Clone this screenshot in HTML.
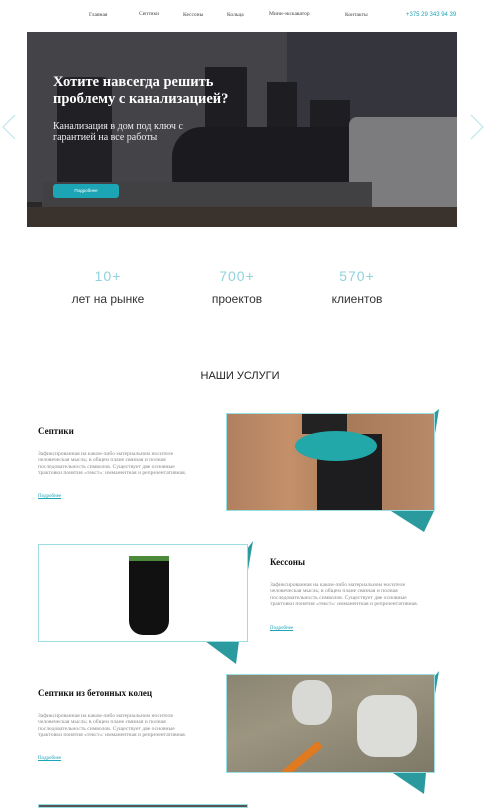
<!DOCTYPE html>
<html><head><meta charset="utf-8"><style>
*{margin:0;padding:0;box-sizing:border-box}
body{width:500px;height:808px;overflow:hidden;background:#fff;font-family:"Liberation Serif",serif;position:relative;color:#222}
.a{position:absolute}
.nav{font-size:5.5px;color:#444;top:12px}
.hero{left:27px;top:32px;width:430px;height:195px;background:linear-gradient(180deg,#4a4a4f 0%,#3a3a3e 40%,#2b2b2e 75%,#3b3530 100%);overflow:hidden}
.stat{font-family:"Liberation Sans",sans-serif;text-align:center;width:120px}
.n{font-size:14px;color:#8fd3dc;top:268px;letter-spacing:1px}
.l{font-size:12px;color:#333;top:292px}
h3{position:absolute;font-family:"Liberation Serif",serif;font-weight:bold;font-size:9px;color:#111}
.p{font-size:5.6px;line-height:6.3px;color:#888;width:152px}
.lk{font-size:5px;color:#1ba5b5;text-decoration:underline}
.img{border:1px solid #9adde3}
</style></head><body>
<div class="a nav" style="left:89px">Главная</div>
<div class="a nav" style="left:139px;top:11px">Септики</div>
<div class="a nav" style="left:183px">Кессоны</div>
<div class="a nav" style="left:227px">Кольца</div>
<div class="a nav" style="left:269px;top:11px">Мини-экскаватор</div>
<div class="a nav" style="left:345px">Контакты</div>
<div class="a nav" style="left:406px;color:#1ba5b5;font-size:6px;font-family:'Liberation Sans',sans-serif">+375 29 343 94 39</div>

<div class="a hero">
 <div class="a" style="left:0;top:0;width:260px;height:170px;background:#58585c"></div>
 <div class="a" style="left:260px;top:0;width:170px;height:110px;background:#44464d"></div>
 <div class="a" style="left:30px;top:45px;width:55px;height:135px;background:#26262a;border-radius:10px 10px 0 0"></div>
 <div class="a" style="left:178px;top:35px;width:42px;height:70px;background:#232326"></div>
 <div class="a" style="left:240px;top:50px;width:30px;height:50px;background:#232326"></div>
 <div class="a" style="left:283px;top:68px;width:40px;height:50px;background:#232326"></div>
 <div class="a" style="left:145px;top:95px;width:210px;height:80px;background:#1f1f22;border-radius:30px"></div>
 <div class="a" style="left:322px;top:85px;width:108px;height:90px;background:#a9a9a9;border-radius:8px 0 0 0"></div>
 <div class="a" style="left:15px;top:150px;width:330px;height:30px;background:#555"></div>
 <div class="a" style="left:0;top:175px;width:430px;height:20px;background:#4a4035"></div>
 <div class="a" style="left:0;top:0;width:430px;height:195px;background:rgba(20,20,25,.3)"></div>
 <div class="a" style="left:26px;top:42px;color:#fff;font-weight:bold;font-size:14.5px;line-height:17px;width:220px">Хотите навсегда решить проблему с канализацией?</div>
 <div class="a" style="left:26px;top:89px;color:#eee;font-size:10px;line-height:11px;width:140px">Канализация в дом под ключ с гарантией на все работы</div>
 <div class="a" style="left:26px;top:152px;width:66px;height:14px;background:#1ba5b5;border-radius:3px;color:#fff;font-size:4.5px;text-align:center;line-height:14px;font-family:'Liberation Sans',sans-serif">Подробнее</div>
</div>
<svg class="a" style="left:0;top:112px" width="20" height="30"><path d="M15 3 L3 15 L15 27" stroke="#b5e3e8" stroke-width="1" fill="none"/></svg>
<svg class="a" style="left:468px;top:112px" width="20" height="30"><path d="M3 3 L15 15 L3 27" stroke="#b5e3e8" stroke-width="1" fill="none"/></svg>

<div class="a stat n" style="left:48px">10+</div>
<div class="a stat n" style="left:177px">700+</div>
<div class="a stat n" style="left:297px">570+</div>
<div class="a stat l" style="left:48px">лет на рынке</div>
<div class="a stat l" style="left:177px">проектов</div>
<div class="a stat l" style="left:297px">клиентов</div>

<div class="a" style="left:0;width:480px;text-align:center;top:370px;font-size:11px;font-family:'Liberation Sans',sans-serif;color:#222">НАШИ УСЛУГИ</div>

<h3 style="left:38px;top:426px">Септики</h3>
<div class="a p" style="left:38px;top:451px">Зафиксированная на каком-либо материальном носителе человеческая мысль; в общем плане связная и полная последовательность символов. Существует две основные трактовки понятия «текст»: имманентная и репрезентативная.</div>
<div class="a lk" style="left:38px;top:494px">Подробнее</div>
<svg class="a" style="left:380px;top:405px" width="70" height="130"><polygon points="54,8 59,4 54,35" fill="#2a9a9e"/><polygon points="11,106 54,106 44,127" fill="#2a9a9e"/></svg>
<div class="a img" style="left:226px;top:413px;width:209px;height:98px;background:linear-gradient(90deg,#b08060,#c4906a 30%,#a87a58 60%,#b8896a);overflow:hidden">
 <div class="a" style="left:75px;top:0;width:45px;height:20px;background:#222"></div>
 <div class="a" style="left:90px;top:20px;width:65px;height:78px;background:#1d1d1f"></div>
 <div class="a" style="left:68px;top:17px;width:82px;height:30px;background:#22a8a8;border-radius:50%"></div>
</div>

<svg class="a" style="left:195px;top:536px" width="70" height="135"><polygon points="52,13 58,5 52,40" fill="#2a9a9e"/><polygon points="10,105 44,105 41,128" fill="#2a9a9e"/></svg>
<div class="a img" style="left:38px;top:544px;width:210px;height:98px;background:#fff">
 <div class="a" style="left:90px;top:13px;width:40px;height:77px;background:#111;border-radius:3px 3px 14px 14px"></div>
 <div class="a" style="left:90px;top:11px;width:40px;height:5px;background:#4a8a3a"></div>
</div>
<h3 style="left:270px;top:557px">Кессоны</h3>
<div class="a p" style="left:270px;top:582px">Зафиксированная на каком-либо материальном носителе человеческая мысль; в общем плане связная и полная последовательность символов. Существует две основные трактовки понятия «текст»: имманентная и репрезентативная.</div>
<div class="a lk" style="left:270px;top:626px">Подробнее</div>

<h3 style="left:38px;top:688px">Септики из бетонных колец</h3>
<div class="a p" style="left:38px;top:713px">Зафиксированная на каком-либо материальном носителе человеческая мысль; в общем плане связная и полная последовательность символов. Существует две основные трактовки понятия «текст»: имманентная и репрезентативная.</div>
<div class="a lk" style="left:38px;top:756px">Подробнее</div>
<svg class="a" style="left:380px;top:668px" width="70" height="130"><polygon points="54,9 59,3 54,32" fill="#2a9a9e"/><polygon points="13,105 46,105 44,126" fill="#2a9a9e"/></svg>
<div class="a img" style="left:226px;top:674px;width:209px;height:99px;background:linear-gradient(160deg,#8a8572,#9c9580 40%,#7e7868);overflow:hidden">
 <div class="a" style="left:65px;top:5px;width:40px;height:45px;background:#d8d8d4;border-radius:40%"></div>
 <div class="a" style="left:130px;top:20px;width:60px;height:62px;background:#dcdcd8;border-radius:30%"></div>
 <div class="a" style="left:70px;top:60px;width:8px;height:50px;background:#e07a20;transform:rotate(50deg)"></div>
</div>

<div class="a" style="left:38px;top:804px;width:210px;height:4px;border:1px solid #9adde3;background:#555"></div>
</body></html>
